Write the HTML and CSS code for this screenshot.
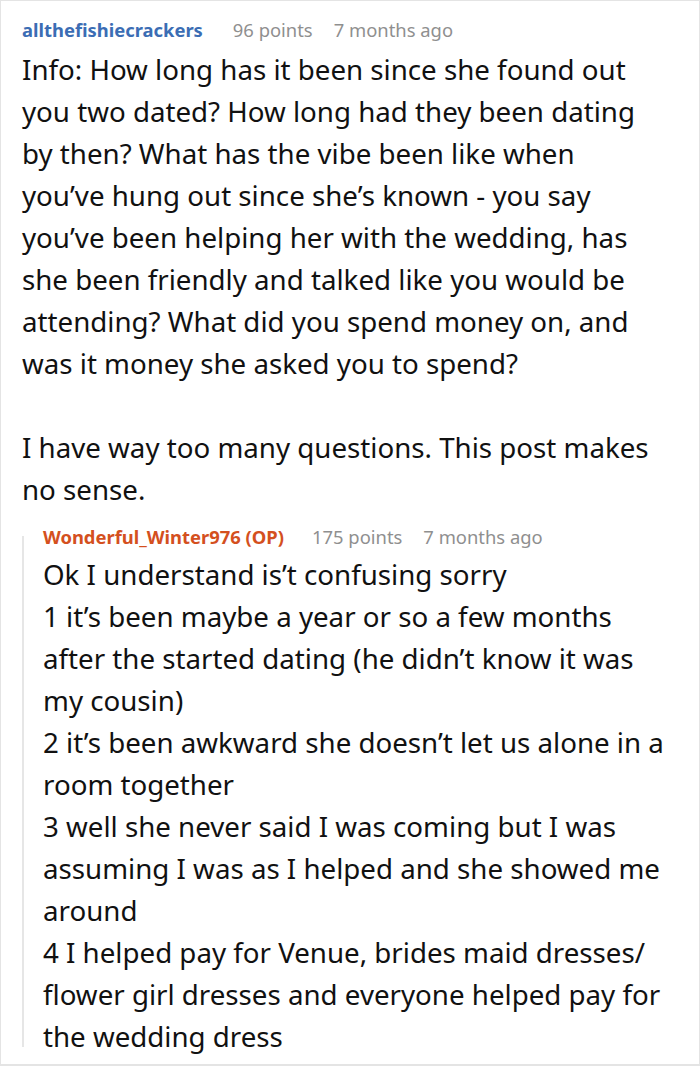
FILE: index.html
```html
<!DOCTYPE html>
<html>
<head>
<meta charset="utf-8">
<link rel="stylesheet" href="styles.css">
</head>
<body>
<div class="comment">
  <div class="meta">
    <span class="author">allthefishiecrackers</span>
    <span class="points">96 points</span>
    <span class="time">7 months ago</span>
  </div>
  <div class="text main-text">
    <p>Info: How long has it been since she found out you two dated? How long had they been dating by then? What has the vibe been like when you’ve hung out since she’s known - you say you’ve been helping her with the wedding, has she been friendly and talked like you would be attending? What did you spend money on, and was it money she asked you to spend?</p>
    <p>I have way too many questions. This post makes no sense.</p>
  </div>
  <div class="reply">
    <div class="meta">
      <span class="author op">Wonderful_Winter976 (OP)</span>
      <span class="points">175 points</span>
      <span class="time">7 months ago</span>
    </div>
    <div class="text">
      <p>Ok I understand is’t confusing sorry<br>1 it’s been maybe a year or so a few months after the started dating (he didn’t know it was my cousin)<br>2 it’s been awkward she doesn’t let us alone in a room together<br>3 well she never said I was coming but I was assuming I was as I helped and she showed me around<br>4 I helped pay for Venue, brides maid dresses/ flower girl dresses and everyone helped pay for the wedding dress</p>
    </div>
  </div>
</div>
</body>
</html>
```

FILE: styles.css
```css
html, body {
  margin: 0;
  padding: 0;
  background: #ffffff;
}
body {
  font-family: "Noto Sans", "Open Sans", sans-serif;
  color: #111111;
}
.comment {
  box-sizing: border-box;
  width: 700px;
  height: 1066px;
  border: 1px solid #e4e4e4;
  border-bottom-width: 2px;
  padding: 14px 34px 0 21px;
  overflow: hidden;
}
.meta {
  display: flex;
  align-items: baseline;
  font-size: 18.4px;
  line-height: 30px;
  white-space: nowrap;
}
.author {
  font-weight: 700;
  color: #3b6db4;
  margin-right: 30px;
}
.author.op {
  color: #d4501e;
  margin-right: 28px;
}
.points {
  color: #8f8f8f;
  margin-right: 21px;
}
.time {
  color: #8f8f8f;
}
.text {
  font-size: 27.7px;
  line-height: 42px;
  margin-top: 3px;
}
.main-text {
  margin-right: 6px;
}
.reply .text {
  margin-top: 1px;
}
.text p {
  margin: 0 0 42px 0;
}
.text p:last-child {
  margin-bottom: 0;
}
.reply {
  margin-top: 12px;
  padding-left: 21px;
  background: linear-gradient(#e6e6e6, #e6e6e6) no-repeat 0 14px / 2px calc(100% - 24px);
}
```
